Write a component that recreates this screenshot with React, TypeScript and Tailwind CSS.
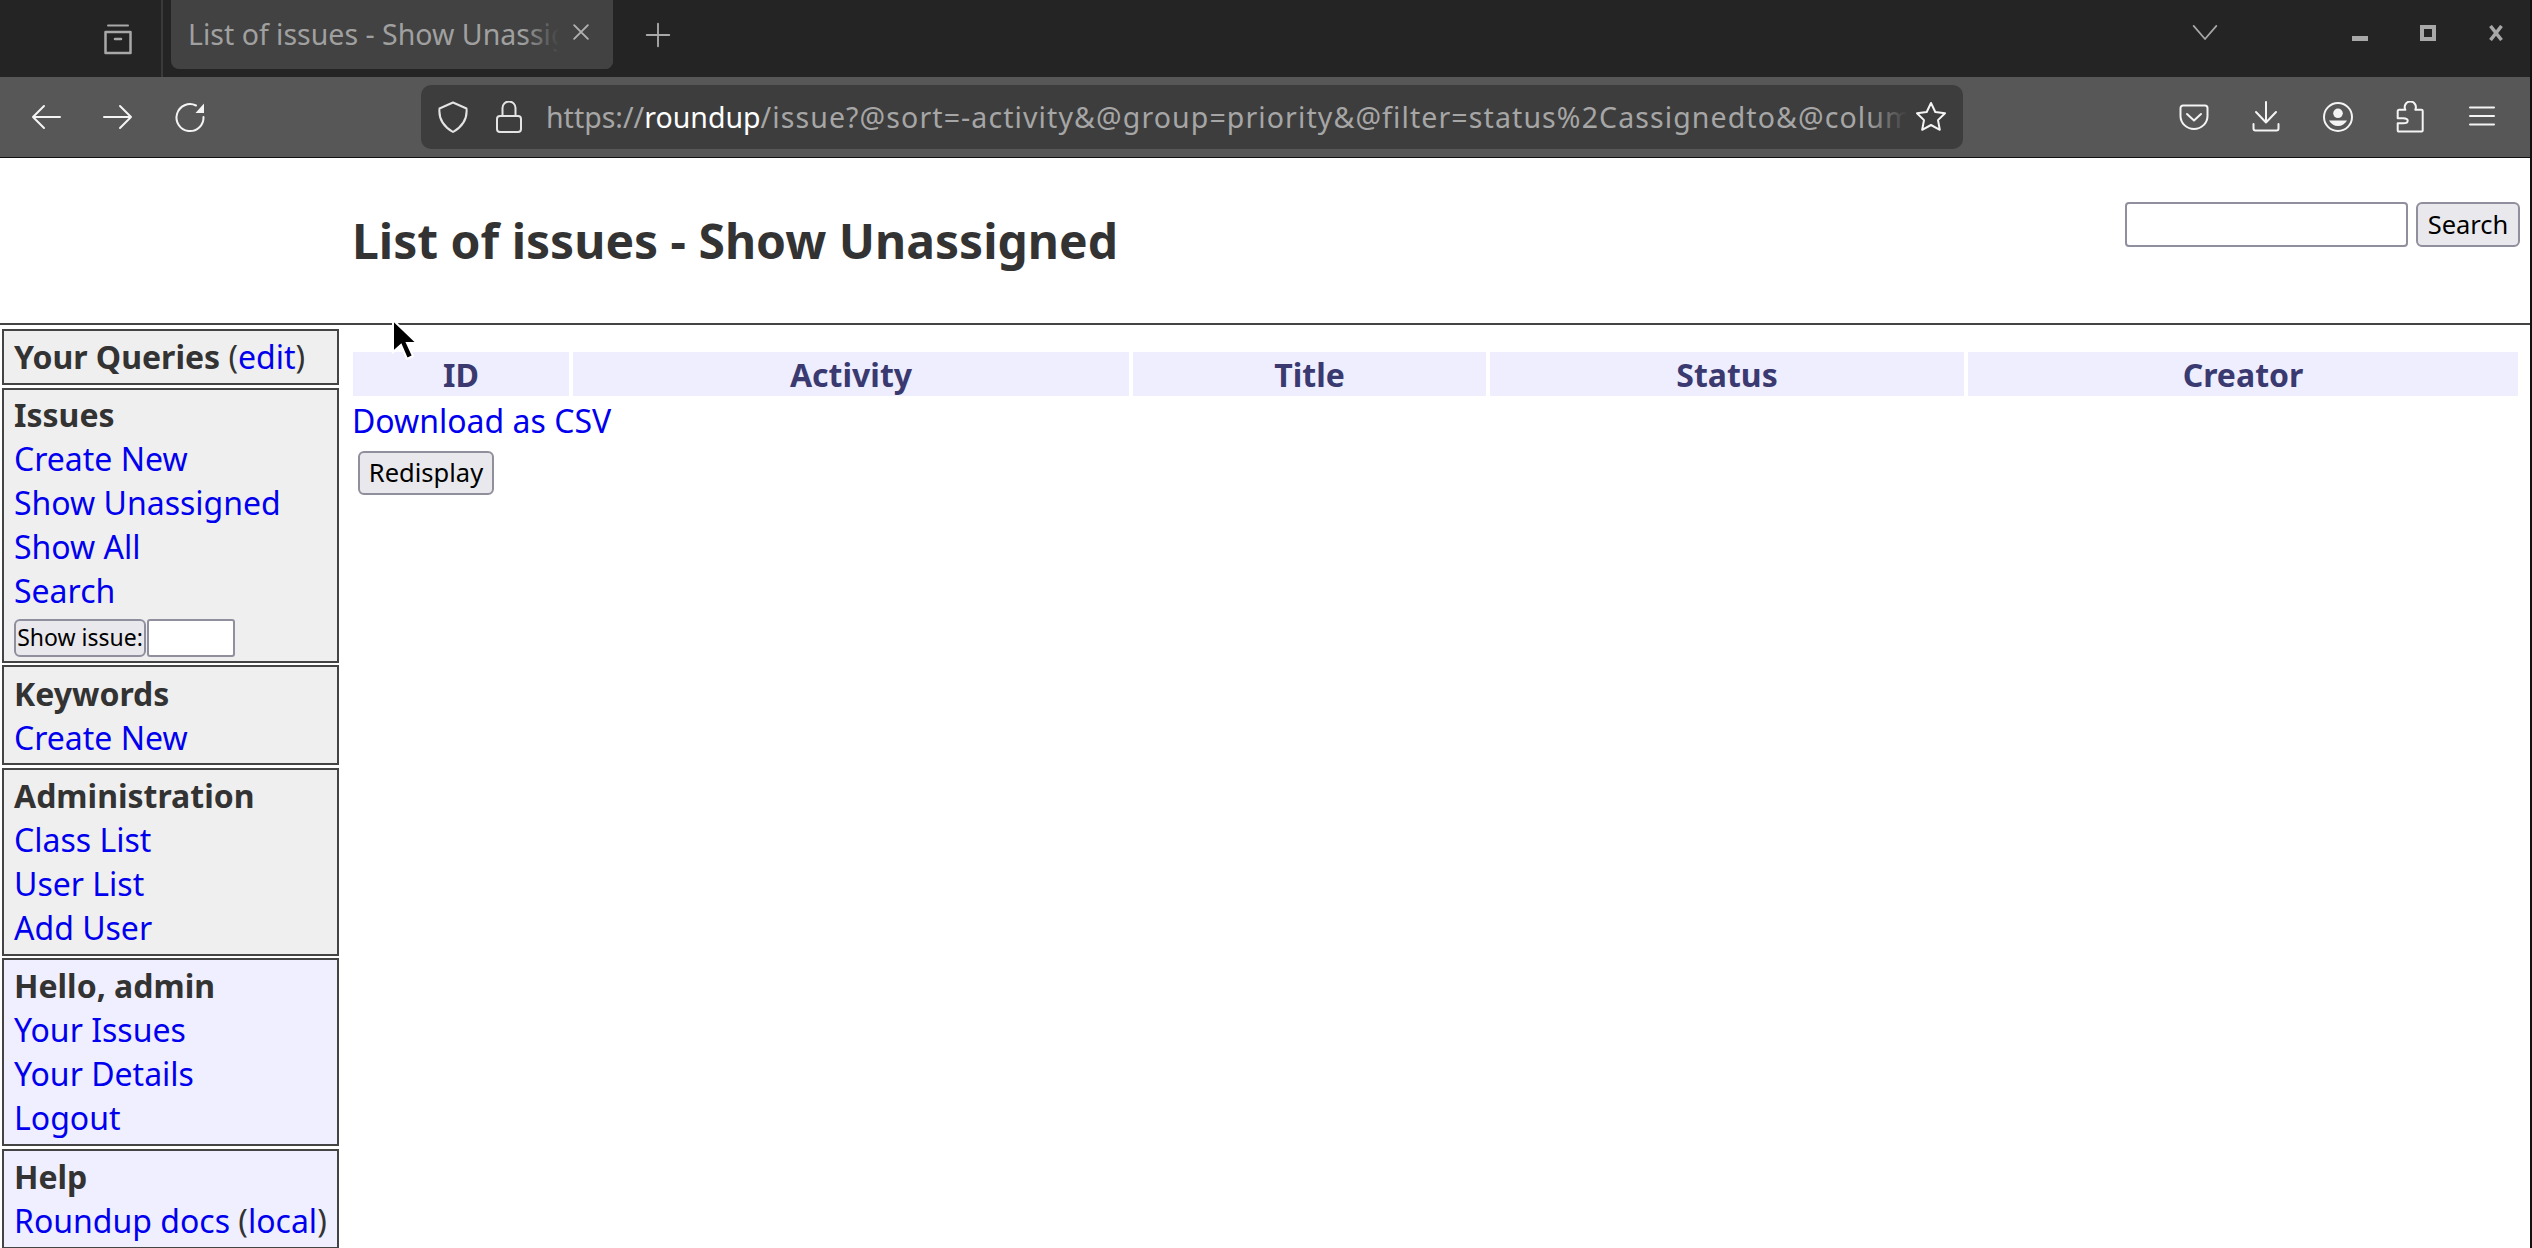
import React from 'react';

const NOTO = "font-['Noto_Sans',sans-serif]";

const Icon: React.FC<{ className?: string; children: React.ReactNode; size?: number }> = ({ className, children, size = 32 }) => (
  <svg width={size} height={size} viewBox="0 0 32 32" fill="none" stroke="currentColor" strokeWidth="2" strokeLinecap="round" strokeLinejoin="round" className={className}>
    {children}
  </svg>
);

const ToolButton: React.FC<{ children: React.ReactNode }> = ({ children }) => (
  <div className="flex h-[72px] w-[72px] items-center justify-center text-[#f4f4f4]">{children}</div>
);

const TitleBar = () => (
  <div className="flex h-[77px] shrink-0 bg-[#242424] text-[#a8a8a8]">
    <div className="flex w-[163px] items-center justify-end border-r-2 border-[#3a3a3a] pr-[27px]">
      <Icon>
        <path d="M6 2.5h20" strokeWidth="2" />
        <path d="M3.5 9h25v21h-25z" strokeWidth="2.5" />
        <path d="M13 16h6" strokeWidth="2.5" />
      </Icon>
    </div>
    <div className="relative ml-[8px] flex h-[69px] w-[442px] items-center overflow-hidden rounded-b-[8px] bg-[#424242] pl-[17px]">
      <span className="whitespace-nowrap font-['Noto_Sans',sans-serif] text-[28.5px] text-[#a0a0a0]">List of issues - Show Unassigned</span>
      <div className="absolute inset-y-0 right-0 w-[90px] bg-gradient-to-r from-transparent to-[#424242] to-[40%]" />
      <div className="absolute right-[22px] top-[22px] text-[#b0b0b0]">
        <Icon size={20}>
          <path d="M5 5l22 22M27 5L5 27" strokeWidth="3" />
        </Icon>
      </div>
    </div>
    <div className="ml-[30px] flex items-center pb-[8px]">
      <Icon size={30}>
        <path d="M16 4v24M4 16h24" />
      </Icon>
    </div>
    <div className="ml-auto flex items-center pb-[14px]">
      <Icon size={28}>
        <path d="M3 9l13 15L29 9" />
      </Icon>
    </div>
    <div className="ml-[133px] mr-[26px] flex items-start gap-[52px] pt-[25px]">
      <div className="mt-[11px] h-[5px] w-[16px] bg-[#a8a8a8]" />
      <div className="h-[16px] w-[16px] border-[4px] border-[#a8a8a8]" />
      <Icon size={16}>
        <path d="M5 2l22 28M27 2L5 30" strokeWidth="7" strokeLinecap="butt" />
      </Icon>
    </div>
  </div>
);

const NavBar = () => (
  <div className="flex h-[81px] shrink-0 items-center border-b-[1px] border-[#111] bg-[#575757] pl-[10px] pr-[12px]">
    <ToolButton>
      <Icon>
        <path d="M30 16H3M14 5L3 16l11 11" />
      </Icon>
    </ToolButton>
    <ToolButton>
      <Icon>
        <path d="M2 16h27M18 5l11 11-11 11" />
      </Icon>
    </ToolButton>
    <ToolButton>
      <Icon>
        <path d="M22 4.5A13.5 13.5 0 1 0 29.5 16" />
        <path d="M30 2.5V12h-8.5z" fill="currentColor" stroke="none" />
      </Icon>
    </ToolButton>
    <div className="ml-[195px] flex h-[64px] w-[1542px] items-center rounded-[10px] bg-[#3d3d3d] pl-[16px] pr-[16px] text-[#f4f4f4]">
      <div className="text-[#e4e4e4]">
        <Icon>
          <path d="M16 1.5l13.5 6c1 10-4 18-13.5 23.5C6.500 25.500 1.500 17.500 2.500 7.500z" />
        </Icon>
      </div>
      <div className="ml-[24px] text-[#e4e4e4]">
        <Icon>
          <path d="M9.500 15V7a6.500 6.500 0 0 1 13 0v8" />
          <rect x="4" y="15" width="24" height="16" rx="3" />
        </Icon>
      </div>
      <div className="relative ml-[21px] min-w-0 flex-1 overflow-hidden whitespace-nowrap font-['Noto_Sans',sans-serif] text-[28.5px] text-[#a6a6a6]">
        https://<span className="text-white">roundup</span><span className="tracking-[1.1px]">/issue?@sort=-activity&amp;@group=priority&amp;@filter=status%2Cassignedto&amp;@columns=title,id,activity,status,creator</span>
        <div className="absolute inset-y-0 right-0 w-[40px] bg-gradient-to-r from-transparent to-[#3d3d3d]" />
      </div>
      <div className="ml-[8px]">
        <Icon>
          <path d="M16 2l4.300 9 9.700 1.300-7 6.800 1.800 9.700-8.800-4.800-8.800 4.800 1.800-9.700-7-6.800 9.700-1.300z" />
        </Icon>
      </div>
    </div>
    <div className="ml-auto flex">
      <ToolButton>
        <Icon>
          <path d="M5 4.500h22a2.500 2.500 0 0 1 2.500 2.500v8c0 7-6 13-13.500 13S2.500 22 2.500 15V7A2.500 2.500 0 0 1 5 4.500z" />
          <path d="M9 13l7 6.500 7-6.500" />
        </Icon>
      </ToolButton>
      <ToolButton>
        <Icon>
          <path d="M16 1v20.500M6 11l10 10.500L26 11M3.500 23v4.500a2 2 0 0 0 2 2h21a2 2 0 0 0 2-2V23" />
        </Icon>
      </ToolButton>
      <ToolButton>
        <Icon>
          <circle cx="16" cy="16" r="14" />
          <circle cx="16" cy="12.300" r="4.800" fill="currentColor" stroke="none" />
          <path d="M7 19.500h18c-2 3.500-5 5.500-9 5.500s-7-2-9-5.500z" fill="currentColor" stroke="none" />
        </Icon>
      </ToolButton>
      <ToolButton>
        <Icon>
          <path d="M5 30.500h22.700a1 1 0 0 0 1-1V10a1.200 1.200 0 0 0-1.200-1.200h-6.200c1.500-3 0-8.300-5-8.300s-6.500 5.300-5 8.300H5a1.300 1.300 0 0 0-1.300 1.300v7.100h5.500c3 0 4.500 1 4.500 2.500s-1.500 2.500-4.500 2.500H3.700v7.300a1 1 0 0 0 1.300 1z" />
        </Icon>
      </ToolButton>
      <ToolButton>
        <Icon>
          <path d="M4 6.500h24M4 15h24M4 23.500h24" />
        </Icon>
      </ToolButton>
    </div>
  </div>
);

const Link: React.FC<{ children: React.ReactNode }> = ({ children }) => (
  <a href="#" className="text-[#0000ee]">{children}</a>
);

const SideBox: React.FC<{ title: React.ReactNode; links?: string[]; tint?: boolean; pad?: string; children?: React.ReactNode }> = ({ title, links = [], tint, pad = 'py-[4px]', children }) => (
  <div className={`border-2 border-[#444] pl-[10px] pr-[2px] ${pad} ${tint ? 'bg-[#efefff]' : 'bg-[#efefef]'}`}>
    <div className="font-bold">{title}</div>
    {links.map((l) => (
      <div key={l}><Link>{l}</Link></div>
    ))}
    {children}
  </div>
);

const Sidebar = () => (
  <div className="ml-[2px] flex w-[337px] shrink-0 flex-col gap-[2.5px] pt-[4px] text-[32px] leading-[44px] text-[#333]">
    <SideBox title={<>Your Queries <span className="font-normal">(<Link>edit</Link>)</span></>} />
    <SideBox pad="pt-[3px] pb-[5px]" title="Issues" links={['Create New', 'Show Unassigned', 'Show All', 'Search']}>
      <div className="flex h-[43px] items-start pt-[6px]">
        <button className="h-[38px] w-[132px] rounded-[6px] border-2 border-[#8f8f9d] bg-[#e9e9ed] text-[23px] leading-none text-black">Show issue:</button>
        <input className="ml-[1px] h-[38px] w-[88px] rounded-[3px] border-2 border-[#8f8f9d] bg-white" />
      </div>
    </SideBox>
    <SideBox pad="pt-[5px] pb-[3px]" title="Keywords" links={['Create New']} />
    <SideBox title="Administration" links={['Class List', 'User List', 'Add User']} />
    <SideBox tint title="Hello, admin" links={['Your Issues', 'Your Details', 'Logout']} />
    <SideBox tint title="Help">
      <div><Link>Roundup docs</Link> (<Link>local</Link>)</div>
    </SideBox>
  </div>
);

const columns = [
  { name: 'ID', width: 'w-[216px]' },
  { name: 'Activity', width: 'w-[556px]' },
  { name: 'Title', width: 'w-[353px]' },
  { name: 'Status', width: 'w-[474px]' },
  { name: 'Creator', width: 'w-[550px]' },
];

const App = () => (
  <div className={`relative flex h-screen w-full flex-col overflow-hidden border-r-2 border-[#111] bg-white ${NOTO}`}>
    <TitleBar />
    <NavBar />
    <div className="flex min-h-0 flex-1 flex-col">
      <div className="flex h-[167px] shrink-0 border-b-2 border-[#444]">
        <h1 className="pl-[352px] pt-[49px] text-[48px] font-bold leading-[67px] text-[#333]">List of issues - Show Unassigned</h1>
        <div className="ml-auto flex items-start gap-[8px] pr-[10px] pt-[44px]">
          <input className="h-[45px] w-[283px] rounded-[4px] border-2 border-[#8f8f9d] bg-white" />
          <button className="h-[45px] w-[104px] rounded-[6px] border-2 border-[#8f8f9d] bg-[#e9e9ed] text-[25.5px] leading-none text-black">Search</button>
        </div>
      </div>
      <div className="flex min-h-0 flex-1">
        <Sidebar />
        <div className="ml-[14px] pt-[27px] text-[32px] leading-[44px]">
          <div className="flex gap-[4px]">
            {columns.map((c) => (
              <div key={c.name} className={`h-[44px] bg-[#eeeeff] pt-[1px] text-center font-bold text-[#3a3a70] ${c.width}`}>{c.name}</div>
            ))}
          </div>
          <div className="-ml-[1px] mt-[3px]"><Link>Download as CSV</Link></div>
          <button className="ml-[5px] mt-[8px] block h-[44px] w-[136px] rounded-[6px] border-2 border-[#8f8f9d] bg-[#e9e9ed] text-[25.5px] leading-none text-black">Redisplay</button>
        </div>
      </div>
    </div>
    {/* mouse pointer left in the screenshot */}
    <svg width="26" height="44" viewBox="0 0 26 44" className="absolute left-[391px] top-[318px]">
      <path d="M2 2v32l8-7 6 14 6-3-6-13h10z" fill="#000" stroke="#fff" strokeWidth="2" />
    </svg>
  </div>
);

export default App;
